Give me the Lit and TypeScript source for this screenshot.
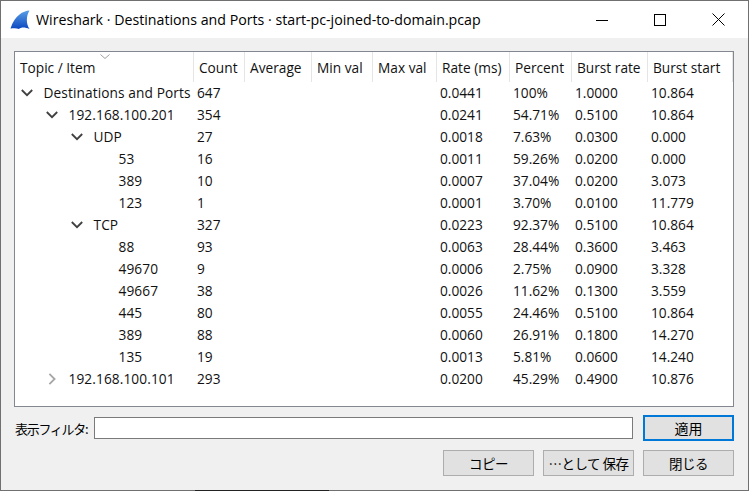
import { LitElement, html, css, svg } from 'lit';
import { customElement } from 'lit/decorators.js';

type Row = {
  depth: number;
  name: string;
  arrow?: 'open' | 'closed';
  count: string;
  rate: string;
  percent: string;
  burst: string;
  start: string;
};

const columns = [
  'Topic / Item',
  'Count',
  'Average',
  'Min val',
  'Max val',
  'Rate (ms)',
  'Percent',
  'Burst rate',
  'Burst start',
];

const rows: Row[] = [
  { depth: 0, name: 'Destinations and Ports', arrow: 'open', count: '647', rate: '0.0441', percent: '100%', burst: '1.0000', start: '10.864' },
  { depth: 1, name: '192.168.100.201', arrow: 'open', count: '354', rate: '0.0241', percent: '54.71%', burst: '0.5100', start: '10.864' },
  { depth: 2, name: 'UDP', arrow: 'open', count: '27', rate: '0.0018', percent: '7.63%', burst: '0.0300', start: '0.000' },
  { depth: 3, name: '53', count: '16', rate: '0.0011', percent: '59.26%', burst: '0.0200', start: '0.000' },
  { depth: 3, name: '389', count: '10', rate: '0.0007', percent: '37.04%', burst: '0.0200', start: '3.073' },
  { depth: 3, name: '123', count: '1', rate: '0.0001', percent: '3.70%', burst: '0.0100', start: '11.779' },
  { depth: 2, name: 'TCP', arrow: 'open', count: '327', rate: '0.0223', percent: '92.37%', burst: '0.5100', start: '10.864' },
  { depth: 3, name: '88', count: '93', rate: '0.0063', percent: '28.44%', burst: '0.3600', start: '3.463' },
  { depth: 3, name: '49670', count: '9', rate: '0.0006', percent: '2.75%', burst: '0.0900', start: '3.328' },
  { depth: 3, name: '49667', count: '38', rate: '0.0026', percent: '11.62%', burst: '0.1300', start: '3.559' },
  { depth: 3, name: '445', count: '80', rate: '0.0055', percent: '24.46%', burst: '0.5100', start: '10.864' },
  { depth: 3, name: '389', count: '88', rate: '0.0060', percent: '26.91%', burst: '0.1800', start: '14.270' },
  { depth: 3, name: '135', count: '19', rate: '0.0013', percent: '5.81%', burst: '0.0600', start: '14.240' },
  { depth: 1, name: '192.168.100.101', arrow: 'closed', count: '293', rate: '0.0200', percent: '45.29%', burst: '0.4900', start: '10.876' },
];

const chevron = (kind: 'open' | 'closed') =>
  kind === 'open'
    ? svg`<svg class="chev" width="12" height="12" viewBox="0 0 12 12"><path d="M0.8 3 L6 8.2 L11.2 3" fill="none" stroke="#404040" stroke-width="1.8"/></svg>`
    : svg`<svg class="chev" width="12" height="12" viewBox="0 0 12 12"><path d="M3.4 0.8 L8.6 6 L3.4 11.2" fill="none" stroke="#a6a6a6" stroke-width="1.8"/></svg>`;

@customElement('app-root')
export class AppRoot extends LitElement {
  static override styles = css`
    :host {
      display: block;
      width: 749px;
      height: 491px;
      font-family: 'Open Sans', 'Noto Sans CJK JP', sans-serif;
      font-size: 13.7px;
      color: #111;
    }
    .window {
      box-sizing: border-box;
      width: 749px;
      height: 491px;
      border: 1px solid #707070;
      background: #f0f0f0;
      display: flex;
      flex-direction: column;
      position: relative;
    }
    .shadow {
      position: absolute;
      left: 194px;
      bottom: -1px;
      width: 134px;
      height: 1px;
      background: #222;
    }
    .titlebar {
      height: 37px;
      flex: none;
      background: #fff;
      display: flex;
      align-items: center;
      padding-left: 9px;
      font-size: 14.2px;
      color: #000;
      white-space: nowrap;
    }
    .logo {
      margin-right: 6px;
      flex: none;
    }
    .controls {
      margin-left: auto;
      display: flex;
      align-items: center;
    }
    .controls button {
      width: 58.6px;
      height: 37px;
      padding: 0;
      border: none;
      background: none;
      display: flex;
      align-items: center;
      justify-content: center;
    }
    .body {
      flex: 1;
      display: flex;
      flex-direction: column;
      padding: 13px 14px 12px 13px;
    }
    .tree {
      box-sizing: border-box;
      height: 356px;
      border: 1px solid #828790;
      background: #fff;
      flex: none;
    }
    .grid {
      display: grid;
      grid-template-columns: 179px 51px 67px 61px 64px 73px 62px 76px 1fr;
    }
    .head {
      height: 30px;
      display: flex;
      align-items: center;
      padding-left: 5px;
      border-right: 1px solid #e5e5e5;
      white-space: nowrap;
      box-sizing: border-box;
      position: relative;
    }
    .head:last-child {
      border-right: none;
    }
    .sort {
      position: absolute;
      left: 85px;
      top: 2px;
    }
    .cell {
      height: 22px;
      line-height: 22px;
      padding-left: 3px;
      white-space: nowrap;
      box-sizing: border-box;
      position: relative;
    }
    .cell.name {
      letter-spacing: 0.1px;
    }
    .chev {
      position: absolute;
      top: 5px;
      margin-left: -22.5px;
    }
    .filter {
      display: flex;
      align-items: center;
      margin-top: 10px;
      height: 22px;
    }
    .filter label {
      width: 79px;
      padding-left: 1px;
      flex: none;
      font-family: 'Noto Sans CJK JP', sans-serif;
      font-size: 13px;
      letter-spacing: -1.3px;
      color: #000;
      white-space: nowrap;
    }
    .filter .input {
      width: 539px;
      height: 22px;
      box-sizing: border-box;
      border: 1px solid #7a7a7a;
      background: #fff;
      flex: none;
    }
    .btn {
      box-sizing: border-box;
      width: 91px;
      height: 26px;
      background: #e1e1e1;
      border: 1px solid #adadad;
      display: flex;
      align-items: center;
      justify-content: center;
      font-family: 'Noto Sans CJK JP', sans-serif;
      font-size: 13.5px;
      letter-spacing: -0.5px;
      color: #000;
      white-space: nowrap;
    }
    .btn.focus {
      border: 2px solid #0078d7;
      margin-left: 10px;
      font-size: 14px;
      letter-spacing: 0;
    }
    .actions {
      display: flex;
      justify-content: flex-end;
      gap: 9px;
      margin-top: 11px;
    }
  `;

  override render() {
    return html`
      <div class="window">
        <div class="titlebar">
          <svg class="logo" width="20" height="20" viewBox="0 0 20 20">
            <defs>
              <linearGradient id="fin" x1="0" y1="0" x2="0" y2="1">
                <stop offset="0" stop-color="#5aa0e6" />
                <stop offset="1" stop-color="#0a47c0" />
              </linearGradient>
            </defs>
            <path d="M19.5 0.5 C13 1 5 5 0.5 18.5 C4 18 7 18 9 19 C11 17 15 17 19.5 19 C16 14 16 6 19.5 0.5 Z" fill="url(#fin)" />
          </svg>
          Wireshark · Destinations and Ports · start-pc-joined-to-domain.pcap
          <div class="controls">
            <button>
              <svg width="12" height="12" viewBox="0 0 12 12"><path d="M0 6.5 H12" stroke="#000" /></svg>
            </button>
            <button>
              <svg width="12" height="12" viewBox="0 0 12 12"><rect x="0.5" y="0.5" width="11" height="11" fill="none" stroke="#000" /></svg>
            </button>
            <button>
              <svg width="13" height="13" viewBox="0 0 13 13"><path d="M0.5 0.5 L12.5 12.5 M12.5 0.5 L0.5 12.5" stroke="#000" /></svg>
            </button>
          </div>
        </div>
        <div class="body">
          <div class="tree">
            <div class="grid">
              ${columns.map(
                (c, i) => html`<div class="head">
                  ${c}
                  ${i === 0
                    ? html`<svg class="sort" width="10" height="5" viewBox="0 0 10 5"><path d="M0.5 0.5 L5 4.5 L9.5 0.5" fill="none" stroke="#a0a0a0" /></svg>`
                    : ''}
                </div>`
              )}
              ${rows.map(
                (r) => html`
                  <div class="cell name" style="padding-left:${28.5 + r.depth * 25}px">
                    ${r.arrow ? chevron(r.arrow) : ''}${r.name}
                  </div>
                  <div class="cell">${r.count}</div>
                  <div class="cell"></div>
                  <div class="cell"></div>
                  <div class="cell"></div>
                  <div class="cell">${r.rate}</div>
                  <div class="cell">${r.percent}</div>
                  <div class="cell">${r.burst}</div>
                  <div class="cell">${r.start}</div>
                `
              )}
            </div>
          </div>
          <div class="filter">
            <label>表示フィルタ:</label>
            <div class="input"></div>
            <div class="btn focus">適用</div>
          </div>
          <div class="actions">
            <div class="btn">コピー</div>
            <div class="btn">…として 保存</div>
            <div class="btn">閉じる</div>
          </div>
        </div>
        <div class="shadow"></div>
      </div>
    `;
  }
}
